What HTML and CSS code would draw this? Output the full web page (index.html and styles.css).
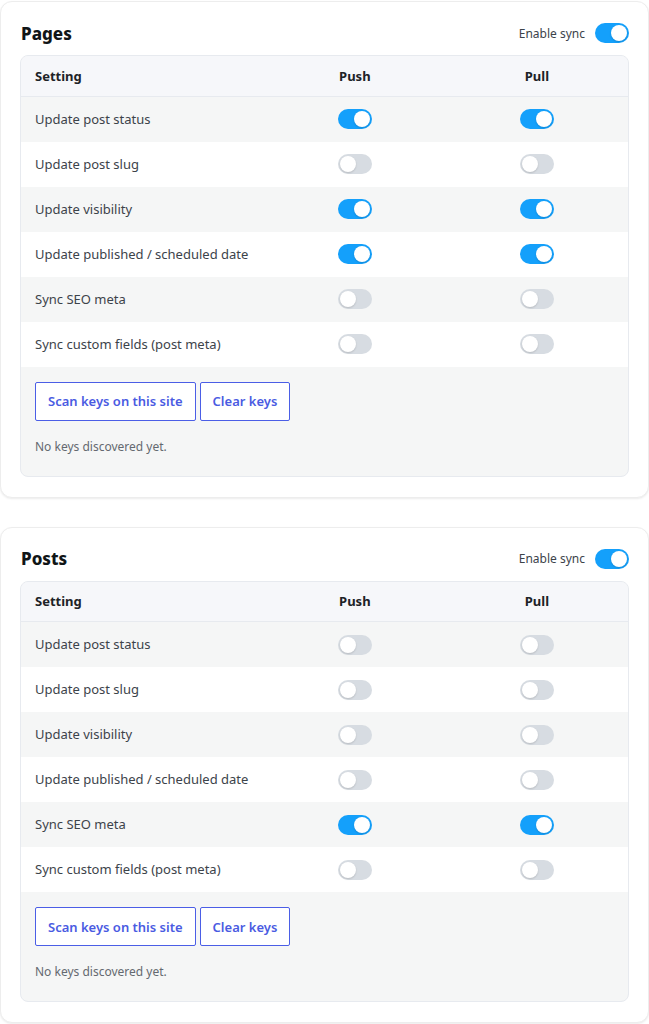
FILE: index.html
```html
<!DOCTYPE html>
<html lang="en">
<head>
    <meta charset="UTF-8">
    <meta name="viewport" content="width=device-width, initial-scale=1.0">
    <title>Sync Settings</title>
    <link rel="stylesheet" href="styles.css">
</head>
<body>
    <div class="wrap">
        <!-- Pages -->
        <section class="card">
            <div class="card-head">
                <h2>Pages</h2>
                <label class="enable">Enable sync <span class="toggle on"></span></label>
            </div>
            <div class="box">
                <table class="sync-table">
                    <thead>
                        <tr><th class="col-setting">Setting</th><th>Push</th><th>Pull</th></tr>
                    </thead>
                    <tbody>
                        <tr><td>Update post status</td><td><span class="toggle on"></span></td><td><span class="toggle on"></span></td></tr>
                        <tr><td>Update post slug</td><td><span class="toggle"></span></td><td><span class="toggle"></span></td></tr>
                        <tr><td>Update visibility</td><td><span class="toggle on"></span></td><td><span class="toggle on"></span></td></tr>
                        <tr><td>Update published / scheduled date</td><td><span class="toggle on"></span></td><td><span class="toggle on"></span></td></tr>
                        <tr><td>Sync SEO meta</td><td><span class="toggle"></span></td><td><span class="toggle"></span></td></tr>
                        <tr><td>Sync custom fields (post meta)</td><td><span class="toggle"></span></td><td><span class="toggle"></span></td></tr>
                    </tbody>
                </table>
                <div class="keys">
                    <div class="buttons">
                        <button class="btn">Scan keys on this site</button>
                        <button class="btn">Clear keys</button>
                    </div>
                    <p class="note">No keys discovered yet.</p>
                </div>
            </div>
        </section>

        <!-- Posts -->
        <section class="card">
            <div class="card-head">
                <h2>Posts</h2>
                <label class="enable">Enable sync <span class="toggle on"></span></label>
            </div>
            <div class="box">
                <table class="sync-table">
                    <thead>
                        <tr><th class="col-setting">Setting</th><th>Push</th><th>Pull</th></tr>
                    </thead>
                    <tbody>
                        <tr><td>Update post status</td><td><span class="toggle"></span></td><td><span class="toggle"></span></td></tr>
                        <tr><td>Update post slug</td><td><span class="toggle"></span></td><td><span class="toggle"></span></td></tr>
                        <tr><td>Update visibility</td><td><span class="toggle"></span></td><td><span class="toggle"></span></td></tr>
                        <tr><td>Update published / scheduled date</td><td><span class="toggle"></span></td><td><span class="toggle"></span></td></tr>
                        <tr><td>Sync SEO meta</td><td><span class="toggle on"></span></td><td><span class="toggle on"></span></td></tr>
                        <tr><td>Sync custom fields (post meta)</td><td><span class="toggle"></span></td><td><span class="toggle"></span></td></tr>
                    </tbody>
                </table>
                <div class="keys">
                    <div class="buttons">
                        <button class="btn">Scan keys on this site</button>
                        <button class="btn">Clear keys</button>
                    </div>
                    <p class="note">No keys discovered yet.</p>
                </div>
            </div>
        </section>
    </div>
</body>
</html>
```

FILE: styles.css
```css
/* General Styles */
body {
    margin: 0;
    padding: 0;
    background-color: #fff;
    font-family: "Noto Sans", "Open Sans", sans-serif;
    color: #3c434a;
}
.wrap {
    padding: 1px 0 0 0;
}
.card {
    background-color: #fff;
    border: 1px solid #ededed;
    border-radius: 12px;
    box-shadow: 0 1px 2px rgba(0, 0, 0, 0.08);
    padding: 19px 19px 20px 19px;
    margin-bottom: 29px;
}
.card-head {
    display: flex;
    align-items: center;
    justify-content: space-between;
    height: 24px;
    margin-bottom: 10px;
}
.card-head h2 {
    margin: 0;
    font-size: 17px;
    font-weight: 800;
    color: #101517;
    padding-left: 1px;
}
.enable {
    display: flex;
    align-items: center;
    gap: 10px;
    font-size: 12px;
    color: #3c434a;
}
.box {
    border: 1px solid #e7eaef;
    border-radius: 8px;
    overflow: hidden;
    background-color: #f5f6f6;
}
.sync-table {
    width: 100%;
    border-collapse: collapse;
    table-layout: fixed;
    font-size: 13px;
}
.sync-table th {
    box-sizing: border-box;
    height: 40px;
    padding: 0 14px;
    font-weight: 700;
    color: #1d2327;
    background-color: #f6f7fa;
    border-bottom: 1px solid #e7eaef;
    text-align: center;
    width: 30%;
}
.sync-table th.col-setting {
    text-align: left;
    width: 40%;
}
.sync-table td {
    height: 45px;
    padding: 0 14px;
    text-align: center;
    line-height: 1;
    white-space: nowrap;
}
.sync-table td:first-child {
    text-align: left;
}
.sync-table tbody tr:nth-child(odd) td {
    background-color: #f5f6f6;
}
.sync-table tbody tr:nth-child(even) td {
    background-color: #fff;
}
.toggle {
    display: inline-block;
    position: relative;
    width: 34px;
    height: 20px;
    border-radius: 10px;
    background-color: #d7dce2;
    vertical-align: middle;
}
.toggle::after {
    content: "";
    position: absolute;
    top: 2px;
    left: 2px;
    width: 16px;
    height: 16px;
    border-radius: 50%;
    background-color: #fff;
    box-shadow: 0 1px 2px rgba(0, 0, 0, 0.15);
}
.toggle.on {
    background-color: #14a0fb;
}
.toggle.on::after {
    left: 16px;
}
.keys {
    padding: 15px 14px 19px 14px;
}
.buttons {
    display: flex;
    gap: 4px;
}
.btn {
    height: 39px;
    padding: 0 12px;
    font-family: inherit;
    font-size: 13px;
    font-weight: 600;
    color: #4a5be2;
    background-color: #fff;
    border: 1px solid #4b5ee6;
    border-radius: 2px;
}
.note {
    margin: 16px 0 0 0;
    font-size: 12px;
    line-height: 20px;
    color: #646970;
}
```
